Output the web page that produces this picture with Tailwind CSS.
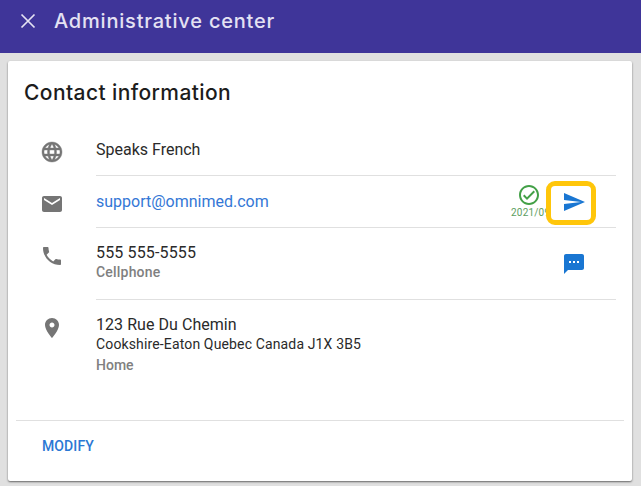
<!DOCTYPE html>
<html>
<head>
<meta charset="utf-8">
<script src="https://cdn.jsdelivr.net/npm/@tailwindcss/browser@4"></script>
</head>
<body class="w-[641px] h-[486px] overflow-hidden bg-[#e0e0e0] font-['Roboto',sans-serif] text-[#2a2a2a]">
<header class="h-[53px] bg-[#3f3599] flex items-center pl-[20px] pb-[11px] text-[#e4e2f3]">
  <svg class="w-[16px] h-[16px] mr-[18px]" viewBox="0 0 16 16" fill="none" stroke="currentColor" stroke-width="1.7"><path d="M1.5 1.5l13 13M14.5 1.5l-13 13"/></svg>
  <h1 class="font-['Inter',sans-serif] text-[20px] font-medium leading-[24px] tracking-[0.8px]">Administrative center</h1>
</header>
<main class="ml-[8px] mt-[8px] w-[624px] h-[420px] bg-white rounded-[2px] shadow-[0_1px_2px_rgba(0,0,0,0.55)] flex flex-col">
  <h2 class="font-['Inter',sans-serif] text-[21px] font-medium leading-[26px] pl-[16px] pt-[19px] text-[#1c1c1c] tracking-[0.4px]">Contact information</h2>
  <div class="mt-[22px] flex flex-col">
    <section class="flex h-[48px]">
      <div class="w-[88px] pl-[32px] pt-[12px] shrink-0">
        <svg class="w-[24px] h-[24px]" viewBox="0 0 24 24" fill="#757575" stroke="#757575" stroke-width="0.4"><path d="M11.99 2C6.47 2 2 6.48 2 12s4.47 10 9.99 10C17.52 22 22 17.52 22 12S17.52 2 11.99 2zm6.93 6h-2.95c-.32-1.25-.78-2.45-1.38-3.56 1.84.63 3.37 1.91 4.33 3.56zM12 4.04c.83 1.2 1.48 2.53 1.91 3.96h-3.82c.43-1.43 1.08-2.76 1.91-3.96zM4.26 14C4.1 13.36 4 12.69 4 12s.1-1.36.26-2h3.38c-.08.66-.14 1.32-.14 2s.06 1.34.14 2H4.26zm.82 2h2.95c.32 1.25.78 2.45 1.38 3.56-1.84-.63-3.37-1.9-4.33-3.56zm2.95-8H5.08c.96-1.66 2.49-2.93 4.33-3.56C8.81 5.55 8.35 6.75 8.03 8zM12 19.96c-.83-1.2-1.48-2.53-1.91-3.96h3.82c-.43 1.43-1.08 2.76-1.91 3.96zM14.34 14H9.66c-.09-.66-.16-1.32-.16-2s.07-1.35.16-2h4.68c.09.65.16 1.32.16 2s-.07 1.34-.16 2zm.25 5.56c.6-1.11 1.06-2.31 1.38-3.56h2.95c-.96 1.65-2.49 2.93-4.33 3.56zM16.36 14c.08-.66.14-1.32.14-2s-.06-1.34-.14-2h3.38c.16.64.26 1.31.26 2s-.1 1.36-.26 2h-3.38z"/></svg>
      </div>
      <div class="flex-1 mr-[16px] border-b border-[#e0e0e0] pt-[10px] text-[16px] leading-[24px]">Speaks French</div>
    </section>
    <section class="flex h-[52px]">
      <div class="w-[88px] pl-[32px] pt-[16px] shrink-0">
        <svg class="w-[24px] h-[24px]" viewBox="0 0 24 24" fill="#757575"><path d="M20 4H4c-1.1 0-1.99.9-1.99 2L2 18c0 1.1.9 2 2 2h16c1.1 0 2-.9 2-2V6c0-1.1-.9-2-2-2zm0 4l-8 5-8-5V6l8 5 8-5v2z"/></svg>
      </div>
      <div class="flex-1 mr-[16px] border-b border-[#e0e0e0] flex relative">
        <a class="pt-[14px] text-[16px] leading-[24px] text-[#3477d6]">support@omnimed.com</a>
        <div class="absolute left-[415px] top-[7px] w-[36px] flex flex-col items-center">
          <svg class="w-[24px] h-[24px] shrink-0" viewBox="0 0 24 24" fill="#43a047"><path d="M16.59 7.58L10 14.17l-2.59-2.58L6 13l4 4 8-8zM12 2C6.48 2 2 6.48 2 12s4.48 10 10 10 10-4.48 10-10S17.52 2 12 2zm0 18c-4.42 0-8-3.58-8-8s3.58-8 8-8 8 3.58 8 8-3.58 8-8 8z"/></svg>
          <span class="text-[10px] leading-[12px] text-[#5c9e60] tracking-[0.2px] self-start whitespace-nowrap">2021/09/14</span>
        </div>
        <div class="absolute left-[450px] top-[5px] w-[50px] h-[44px] rounded-[9px] border-[5px] border-[#ffc60a] bg-white flex items-center justify-center">
          <svg class="w-[24px] h-[24px] ml-[6px] mb-[2px]" viewBox="0 0 24 24" fill="#1976d2"><path d="M2 21L23 12 2 3V10L19 12 2 14z"/></svg>
        </div>
      </div>
    </section>
    <section class="flex h-[72px]">
      <div class="w-[88px] pl-[32px] pt-[16px] shrink-0">
        <svg class="w-[24px] h-[24px]" viewBox="0 0 24 24" fill="#757575"><path d="M6.62 10.79c1.44 2.83 3.76 5.14 6.59 6.59l2.2-2.2c.27-.27.67-.36 1.02-.24 1.12.37 2.33.57 3.57.57.55 0 1 .45 1 1V20c0 .55-.45 1-1 1-9.39 0-17-7.61-17-17 0-.55.45-1 1-1h3.5c.55 0 1 .45 1 1 0 1.25.2 2.45.57 3.57.11.35.03.74-.25 1.02l-2.2 2.2z"/></svg>
      </div>
      <div class="flex-1 mr-[16px] border-b border-[#e0e0e0] pt-[13px] relative">
        <div class="text-[16px] leading-[24px] tracking-[0.15px]">555 555-5555</div>
        <div class="text-[14px] leading-[20px] font-medium text-[#808080] mt-[-3px] tracking-[0.2px]">Cellphone</div>
        <svg class="absolute left-[466px] top-[24px] w-[24px] h-[24px]" viewBox="0 0 24 24" fill="#1976d2"><path d="M20 2H4c-1.1 0-1.99.9-1.99 2L2 22l4-4h14c1.1 0 2-.9 2-2V4c0-1.1-.9-2-2-2zM9 11H7V9h2v2zm4 0h-2V9h2v2zm4 0h-2V9h2v2z"/></svg>
      </div>
    </section>
    <section class="flex h-[120px]">
      <div class="w-[88px] pl-[32px] pt-[16px] shrink-0">
        <svg class="w-[24px] h-[24px]" viewBox="0 0 24 24" fill="#757575"><path d="M12 2C8.13 2 5 5.13 5 9c0 5.25 7 13 7 13s7-7.75 7-13c0-3.87-3.13-7-7-7zm0 9.5c-1.38 0-2.5-1.12-2.5-2.5s1.12-2.5 2.5-2.5 2.5 1.12 2.5 2.5-1.12 2.5-2.5 2.5z"/></svg>
      </div>
      <div class="flex-1 pt-[13px]">
        <div class="text-[16px] leading-[24px] tracking-[0.05px]">123 Rue Du Chemin</div>
        <div class="text-[14px] leading-[20px] mt-[-3px] tracking-[0.14px]">Cookshire-Eaton Quebec Canada J1X 3B5</div>
        <div class="text-[14px] leading-[20px] font-medium text-[#808080] mt-[1px]">Home</div>
      </div>
    </section>
    <div class="mx-[8px] h-px bg-[#e0e0e0]"></div>
  </div>
  <div class="pl-[34px] pt-[13px]">
    <button class="text-[14px] leading-[20px] font-medium text-[#2b78d4] tracking-[0.1px]">MODIFY</button>
  </div>
</main>
</body>
</html>
